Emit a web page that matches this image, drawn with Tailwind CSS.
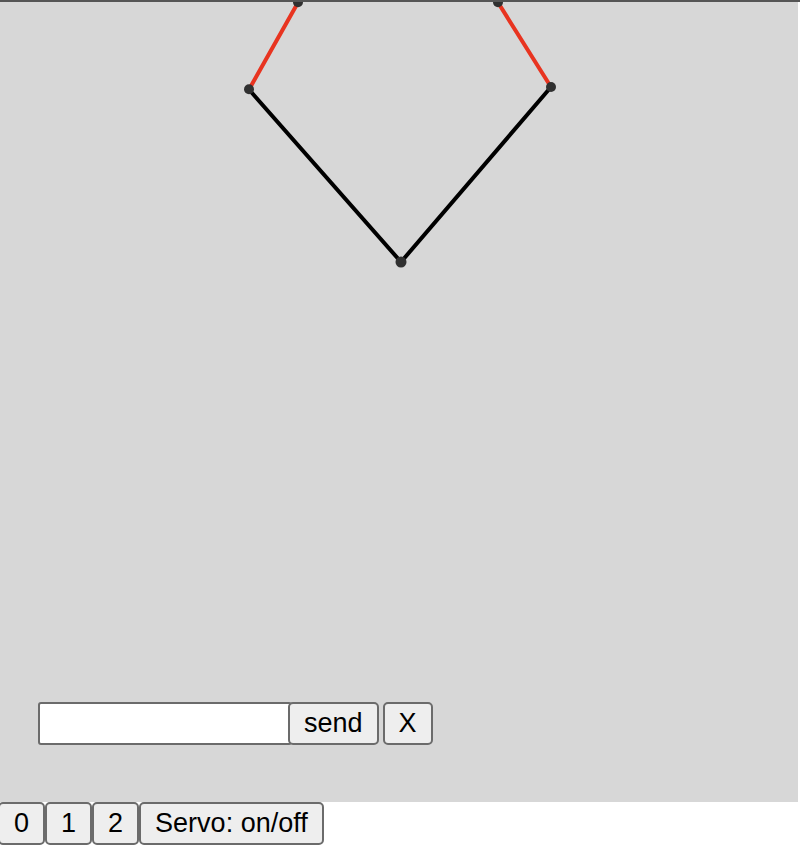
<!DOCTYPE html>
<html lang="en">
<head>
<meta charset="utf-8">
<meta name="viewport" content="width=device-width, initial-scale=1">
<title>Servo arm control</title>
<script src="https://cdn.jsdelivr.net/npm/@tailwindcss/browser@4"></script>
</head>
<body class="min-h-screen overflow-x-hidden border-t-2 border-[#555555] bg-white font-['Liberation_Sans',Arial,sans-serif] text-[27px] leading-[39px] text-black">
<main class="mr-[2px] flex flex-col bg-[#d7d7d7] pb-[57px]">
  <svg class="h-[700px] w-[798px] max-w-full" viewBox="0 0 798 700" role="img" aria-label="Linkage arm">
    <g fill="none" stroke-width="4">
      <path stroke="#e83420" d="M298 0.5L249 87.5M498 0.5L551 85"/>
      <path stroke="#000000" d="M249 87.5L401 260L551 85"/>
    </g>
    <g fill="#303030">
      <circle cx="298" cy="0.3" r="5"/>
      <circle cx="498" cy="0.3" r="5"/>
      <circle cx="249" cy="87.3" r="5"/>
      <circle cx="551" cy="85" r="5"/>
      <circle cx="401" cy="260" r="5.5"/>
    </g>
  </svg>
  <form class="flex items-stretch pl-[38px]">
    <input type="text" aria-label="Message" class="h-[43px] w-[254px] rounded-[3px] border-2 border-[#6b6b6b] bg-white px-1">
    <button type="button" class="-ml-1 h-[43px] rounded-[5px] border-2 border-[#6b6b6b] bg-[#eeeeee] px-[14px]">send</button>
    <button type="button" class="ml-1 h-[43px] rounded-[5px] border-2 border-[#6b6b6b] bg-[#eeeeee] px-[14px]">X</button>
  </form>
</main>
<nav class="-ml-[2px] flex">
  <button type="button" class="h-[43px] rounded-[5px] border-2 border-[#6b6b6b] bg-[#eeeeee] px-[14px]">0</button>
  <button type="button" class="h-[43px] rounded-[5px] border-2 border-[#6b6b6b] bg-[#eeeeee] px-[14px]">1</button>
  <button type="button" class="h-[43px] rounded-[5px] border-2 border-[#6b6b6b] bg-[#eeeeee] px-[14px]">2</button>
  <button type="button" class="h-[43px] rounded-[5px] border-2 border-[#6b6b6b] bg-[#eeeeee] px-[14px]">Servo: on/off</button>
</nav>
</body>
</html>
